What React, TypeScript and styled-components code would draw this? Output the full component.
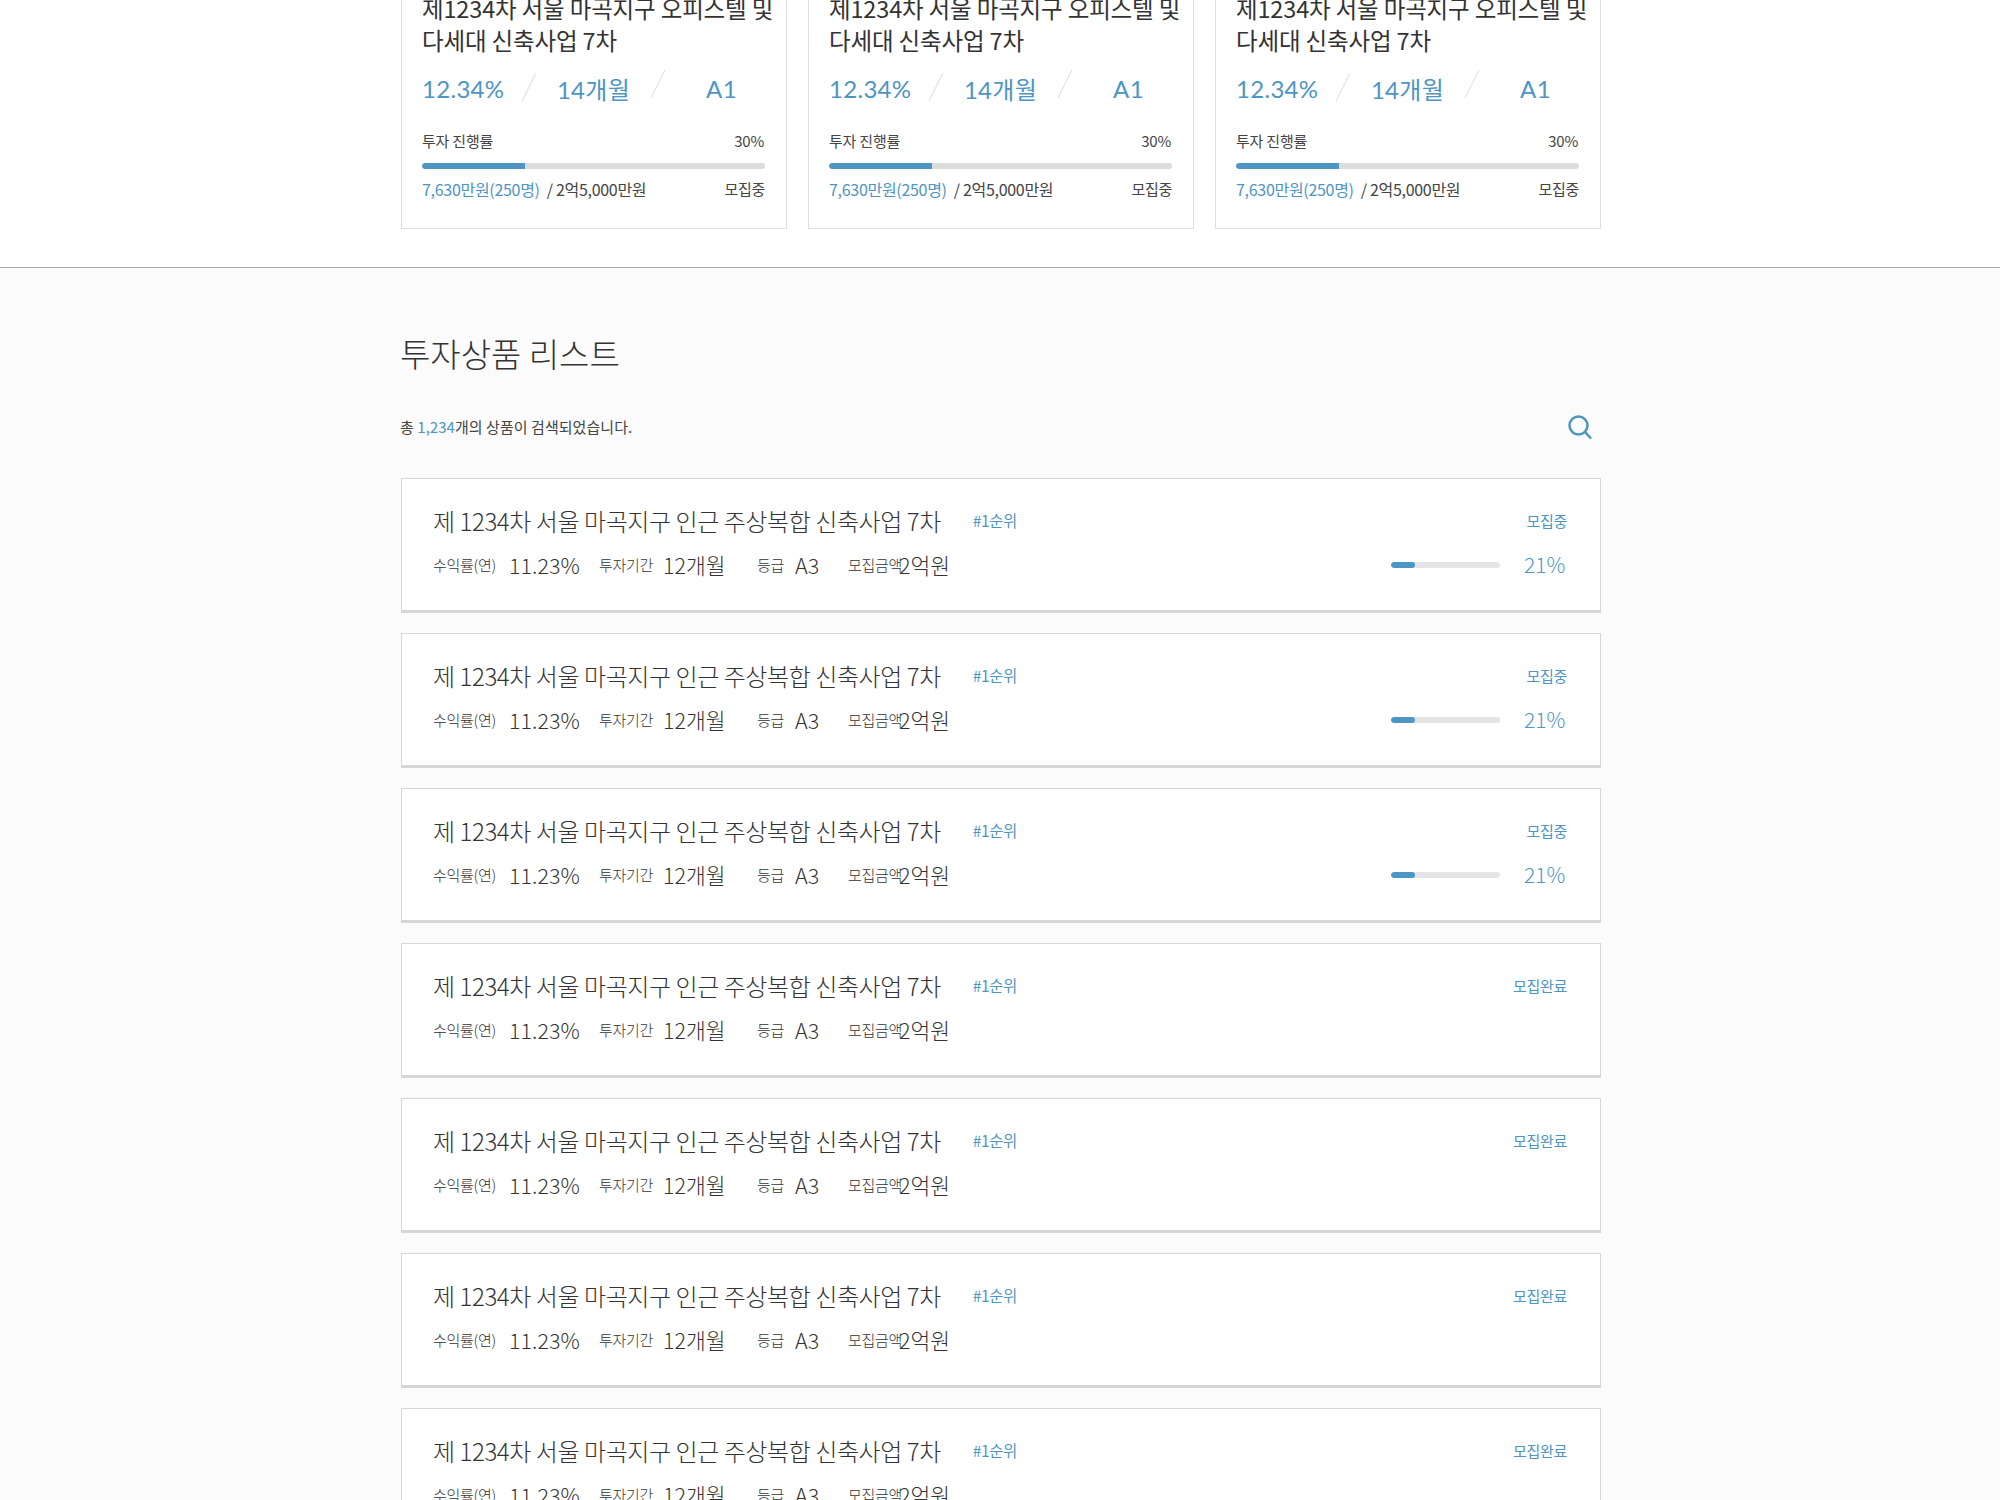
import React from "react";
import styled, { createGlobalStyle } from "styled-components";

const FONT = `"Noto Sans CJK KR", "Noto Sans", sans-serif`;
const BLUE = "#4c95c4";

const Global = createGlobalStyle`
  html, body { margin: 0; padding: 0; background: #fff; }
  body { font-family: ${FONT}; color: #333; }
`;

const Page = styled.div`
  width: 2000px;
  height: 1500px;
  overflow: hidden;
`;
const TopSection = styled.section`
  box-sizing: content-box;
  height: 307px;
  margin-top: -40px;
  background: #fff;
  border-bottom: 1px solid #aaaaaa;
`;
const CardRow = styled.div`
  width: 1200px;
  margin-left: 401px;
  display: grid;
  grid-template-columns: repeat(3, 386px);
  column-gap: 21px;
`;
const Card = styled.article`
  box-sizing: border-box;
  height: 269px;
  border: 1px solid #dedede;
  padding: 32px 20px 0;
`;
const CardTitle = styled.h3`
  margin: 0;
  width: 370px;
  font-size: 23.5px;
  line-height: 31.5px;
  font-weight: 400;
  color: #333;
  letter-spacing: -0.15px;
`;
const Stats = styled.div`
  display: grid;
  grid-template-columns: 115px 129px 99px;
  margin-top: 12px;
  height: 40px;
  align-items: center;
`;
const Stat = styled.div<{ $center?: boolean; $shift?: number }>`
  position: relative;
  font-size: 24px;
  font-family: "Lato", ${FONT};
  color: ${BLUE};
  letter-spacing: 0.3px;
  text-align: ${(p) => (p.$center ? "center" : "left")};
  text-indent: ${(p) => p.$shift ?? 0}px;
`;
const Slash = styled.svg`
  position: absolute;
  right: 0;
  top: -2px;
`;
const ProgressHead = styled.div`
  display: flex;
  justify-content: space-between;
  margin-top: 22px;
  padding-right: 2px;
  font-size: 15px;
  line-height: 22px;
  color: #444;
  letter-spacing: -0.22px;
`;
const Track = styled.div<{ $w: number; $bg: string }>`
  width: ${(p) => p.$w}px;
  height: 6px;
  background: ${(p) => p.$bg};
  border-radius: 3px;
  overflow: hidden;
`;
const CardTrack = styled(Track)`
  margin-top: 11px;
`;
const RowTrack = styled(Track)`
  margin-top: 2px;
`;
const Fill = styled.div`
  height: 100%;
  background: ${BLUE};
  border-radius: 3px 0 0 3px;
`;
const RoundFill = styled(Fill)`
  border-radius: 3px;
`;
const CardFoot = styled.div`
  display: flex;
  justify-content: space-between;
  margin-top: 9px;
  padding-right: 1px;
  font-size: 15px;
  line-height: 22px;
  color: #444;
  letter-spacing: -0.3px;
`;
const FootLeft = styled.span`
  font-size: 16px;
`;
const Accent = styled.span`
  color: ${BLUE};
`;
const FootAmount = styled.span`
  margin-left: 7px;
`;

const ListSection = styled.section`
  background: #fbfbfb;
  padding-top: 60px;
  height: 1300px;
`;
const Inner = styled.div`
  width: 1200px;
  margin-left: 401px;
`;
const Heading = styled.h2`
  margin: 0 0 0 -1px;
  font-size: 33px;
  line-height: 50px;
  font-weight: 300;
  color: #333;
`;
const CountBar = styled.div`
  display: flex;
  justify-content: space-between;
  align-items: center;
  margin: 34px 0 0 -1px;
  height: 28px;
  padding-right: 9px;
  font-size: 15px;
  color: #444;
  letter-spacing: 0.05px;
`;
const SearchIcon = styled.svg`
  display: block;
  margin-top: 3px;
`;
const List = styled.ul`
  list-style: none;
  margin: 38px 0 0;
  padding: 0;
  display: flex;
  flex-direction: column;
  gap: 20px;
`;
const Row = styled.li`
  box-sizing: border-box;
  height: 135px;
  border: 1px solid #d6d6d6;
  border-bottom: 3px solid #d6d6d6;
  background: #fff;
  padding: 22px 33px 0 31px;
`;
const RowTop = styled.div`
  display: flex;
  align-items: center;
  height: 38px;
`;
const RowTitle = styled.div`
  font-size: 24px;
  font-weight: 300;
  color: #333;
  letter-spacing: -0.42px;
`;
const Rank = styled.span`
  margin-left: 32px;
  font-size: 15.5px;
  color: ${BLUE};
  letter-spacing: -0.4px;
`;
const Status = styled.span`
  margin-left: auto;
  font-size: 15px;
  color: ${BLUE};
  letter-spacing: -0.3px;
`;
const RowBottom = styled.div`
  display: flex;
  align-items: center;
  height: 38px;
  margin-top: 6px;
`;
const Meta = styled.div<{ $w: number }>`
  display: flex;
  align-items: center;
  width: ${(p) => p.$w}px;
`;
const MetaLabel = styled.span<{ $w: number }>`
  width: ${(p) => p.$w}px;
  flex: none;
  white-space: nowrap;
  font-size: 15px;
  font-weight: 300;
  letter-spacing: -0.3px;
  color: #333;
`;
const MetaValue = styled.span`
  font-size: 21.5px;
  font-weight: 300;
  color: #333;
  white-space: nowrap;
`;
const RowProgress = styled.div`
  margin-left: auto;
  display: flex;
  align-items: center;
`;
const Percent = styled.span`
  width: 67px;
  padding-left: 24px;
  box-sizing: border-box;
  font-size: 21px;
  font-weight: 300;
  color: ${BLUE};
  white-space: nowrap;
`;

const Divider = () => (
  <Slash width="16" height="30" viewBox="0 0 16 30">
    <line x1="1" y1="29" x2="15" y2="1" stroke="#dcdcdc" strokeWidth="1" />
  </Slash>
);

const ProductCard = () => (
  <Card>
    <CardTitle>제1234차 서울 마곡지구 오피스텔 및 다세대 신축사업 7차</CardTitle>
    <Stats>
      <Stat>12.34%<Divider /></Stat>
      <Stat $center $shift={-16}>14개월<Divider /></Stat>
      <Stat $center $shift={12}>A1</Stat>
    </Stats>
    <ProgressHead>
      <span>투자 진행률</span>
      <span>30%</span>
    </ProgressHead>
    <CardTrack $w={343} $bg="#dcdcdc">
      <Fill style={{ width: "30%" }} />
    </CardTrack>
    <CardFoot>
      <FootLeft>
        <Accent>7,630만원(250명)</Accent>
        <FootAmount>/ 2억5,000만원</FootAmount>
      </FootLeft>
      <span>모집중</span>
    </CardFoot>
  </Card>
);

const rows = [true, true, true, false, false, false, false];

const ProductRow = ({ open }: { open: boolean }) => (
  <Row>
    <RowTop>
      <RowTitle>제 1234차 서울 마곡지구 인근 주상복합 신축사업 7차</RowTitle>
      <Rank>#1순위</Rank>
      <Status>{open ? "모집중" : "모집완료"}</Status>
    </RowTop>
    <RowBottom>
      <Meta $w={166}><MetaLabel $w={76}>수익률(연)</MetaLabel><MetaValue>11.23%</MetaValue></Meta>
      <Meta $w={158}><MetaLabel $w={64}>투자기간</MetaLabel><MetaValue>12개월</MetaValue></Meta>
      <Meta $w={91}><MetaLabel $w={38}>등급</MetaLabel><MetaValue>A3</MetaValue></Meta>
      <Meta $w={120}><MetaLabel $w={51}>모집금액</MetaLabel><MetaValue>2억원</MetaValue></Meta>
      {open && (
        <RowProgress>
          <RowTrack $w={109} $bg="#e4e4e4">
            <RoundFill style={{ width: "22%" }} />
          </RowTrack>
          <Percent>21%</Percent>
        </RowProgress>
      )}
    </RowBottom>
  </Row>
);

export default function App() {
  return (
    <Page>
      <Global />
      <TopSection>
        <CardRow>
          {[0, 1, 2].map((i) => (
            <ProductCard key={i} />
          ))}
        </CardRow>
      </TopSection>
      <ListSection>
        <Inner>
          <Heading>투자상품 리스트</Heading>
          <CountBar>
            <span>총 <Accent>1,234</Accent>개의 상품이 검색되었습니다.</span>
            <SearchIcon width="24" height="25" viewBox="0 0 24 25" fill="none" stroke={BLUE} strokeWidth="2.5">
              <circle cx="10.5" cy="10.5" r="9" />
              <line x1="17" y1="17" x2="23" y2="23.5" />
            </SearchIcon>
          </CountBar>
          <List>
            {rows.map((open, i) => (
              <ProductRow key={i} open={open} />
            ))}
          </List>
        </Inner>
      </ListSection>
    </Page>
  );
}
